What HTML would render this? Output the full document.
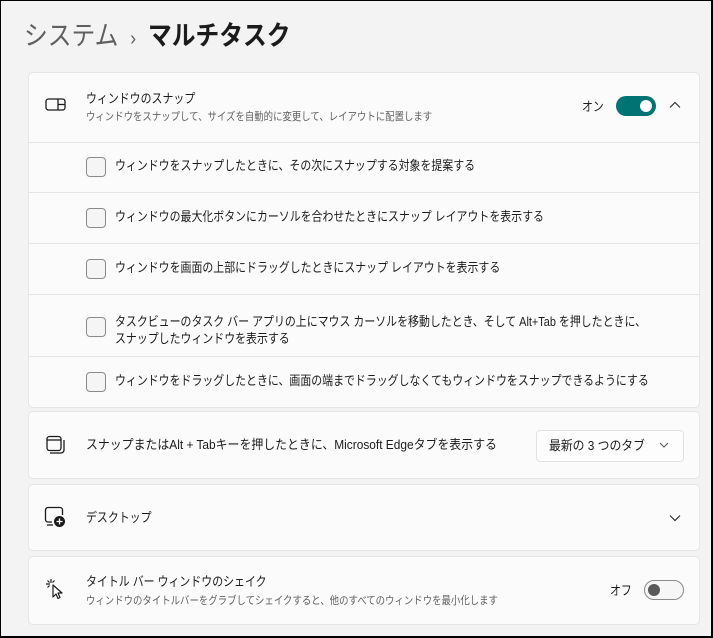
<!DOCTYPE html>
<html><head><meta charset="utf-8"><style>
*{box-sizing:border-box;margin:0;padding:0}
body{width:713px;height:638px;overflow:hidden;background:#f3f3f3;font-family:"Liberation Sans","Noto Sans CJK JP",sans-serif;color:#1b1b1b;position:relative}
.frame{position:absolute;left:0;top:0;width:713px;height:638px;border:1px solid #000;border-right:2px solid #000;border-bottom:2px solid #000;pointer-events:none}
.a{position:absolute}
.card{position:absolute;left:28px;width:672px;background:#fbfbfb;border:1px solid #e5e5e5;border-radius:5px}
.line{position:absolute;left:28px;width:672px;height:1px;background:#e5e5e5}
.t{position:absolute;font-size:13px;white-space:nowrap;line-height:16px;transform:scaleX(0.84);transform-origin:left top}
.s{position:absolute;font-size:11px;color:#606060;white-space:nowrap;line-height:14px;transform:scaleX(0.855);transform-origin:left top}
.cb{position:absolute;left:86px;width:20px;height:20px;border:1px solid #8a8a8a;border-radius:4px;background:#f5f5f5}
</style></head><body>
<div class="a" style="left:24px;top:18px;font-size:27px;line-height:36px;color:#5f5f5f;white-space:nowrap;transform:scaleX(0.88);transform-origin:left top">システム <span style="font-size:20px;margin:0 6px;color:#5f5f5f">›</span> <span style="color:#1b1b1b;font-weight:bold">マルチタスク</span></div>

<div class="card" style="top:72px;height:336px"></div>
<div class="line" style="top:142px"></div>
<div class="line" style="top:192px"></div>
<div class="line" style="top:243px"></div>
<div class="line" style="top:294px"></div>
<div class="line" style="top:356px"></div>

<svg class="a" style="left:45px;top:97px" width="22" height="16" viewBox="0 0 22 16"><rect x="1" y="2" width="19" height="11" rx="2.5" fill="none" stroke="#1b1b1b" stroke-width="1.3"/><line x1="13" y1="2" x2="13" y2="13" stroke="#1b1b1b" stroke-width="1.3"/><line x1="13" y1="7.5" x2="20" y2="7.5" stroke="#1b1b1b" stroke-width="1.3"/></svg>
<div class="t" style="left:86px;top:91px">ウィンドウのスナップ</div>
<div class="s" style="left:86px;top:110px">ウィンドウをスナップして、サイズを自動的に変更して、レイアウトに配置します</div>
<div class="t" style="left:582px;top:99px">オン</div>
<div class="a" style="left:616px;top:96px;width:40px;height:20px;border-radius:10px;background:#017373"></div>
<div class="a" style="left:640px;top:100px;width:12px;height:12px;border-radius:6px;background:#fff"></div>
<svg class="a" style="left:669px;top:101px" width="12" height="8" viewBox="0 0 12 8"><path d="M1 6.5 L6 1.5 L11 6.5" fill="none" stroke="#333" stroke-width="1.2"/></svg>

<div class="cb" style="top:157px"></div><div class="t" style="left:115px;top:158px">ウィンドウをスナップしたときに、その次にスナップする対象を提案する</div>
<div class="cb" style="top:208px"></div><div class="t" style="left:115px;top:209px">ウィンドウの最大化ボタンにカーソルを合わせたときにスナップ レイアウトを表示する</div>
<div class="cb" style="top:259px"></div><div class="t" style="left:115px;top:260px">ウィンドウを画面の上部にドラッグしたときにスナップ レイアウトを表示する</div>
<div class="cb" style="top:317px"></div><div class="t" style="left:115px;top:314px">タスクビューのタスク バー アプリの上にマウス カーソルを移動したとき、そして Alt+Tab を押したときに、</div><div class="t" style="left:115px;top:331px">スナップしたウィンドウを表示する</div>
<div class="cb" style="top:372px"></div><div class="t" style="left:115px;top:373px">ウィンドウをドラッグしたときに、画面の端までドラッグしなくてもウィンドウをスナップできるようにする</div>

<div class="card" style="top:411px;height:68px"></div>
<svg class="a" style="left:45px;top:435px" width="22" height="20" viewBox="0 0 22 20"><rect x="2" y="1.5" width="14" height="14" rx="2.5" fill="none" stroke="#1b1b1b" stroke-width="1.3"/><line x1="2" y1="5" x2="16" y2="5" stroke="#1b1b1b" stroke-width="1.3"/><path d="M5 18 H16 a3 3 0 0 0 3-3 V5" fill="none" stroke="#1b1b1b" stroke-width="1.3"/></svg>
<div class="t" style="left:86px;top:437px;transform:scaleX(0.915)">スナップまたはAlt + Tabキーを押したときに、Microsoft Edgeタブを表示する</div>
<div class="a" style="left:536px;top:430px;width:148px;height:32px;border:1px solid #e2e2e2;border-radius:4px;background:#fdfdfd"></div>
<div class="t" style="left:549px;top:438px;transform:scaleX(0.91)">最新の 3 つのタブ</div>
<svg class="a" style="left:659px;top:442px" width="10" height="6" viewBox="0 0 10 6"><path d="M1 1 L5 5 L9 1" fill="none" stroke="#555" stroke-width="1"/></svg>

<div class="card" style="top:484px;height:67px"></div>
<svg class="a" style="left:44px;top:506px" width="24" height="22" viewBox="0 0 24 22"><path d="M8 16 H4 a2.5 2.5 0 0 1-2.5-2.5 V4 a2.5 2.5 0 0 1 2.5-2.5 H16 a2.5 2.5 0 0 1 2.5 2.5 V9" fill="none" stroke="#1b1b1b" stroke-width="1.3"/><line x1="3" y1="19" x2="9" y2="19" stroke="#1b1b1b" stroke-width="1.3"/><circle cx="15.5" cy="15.5" r="5.5" fill="#1b1b1b"/><path d="M15.5 12.5 V18.5 M12.5 15.5 H18.5" stroke="#fff" stroke-width="1.3"/></svg>
<div class="t" style="left:86px;top:510px">デスクトップ</div>
<svg class="a" style="left:669px;top:514px" width="12" height="8" viewBox="0 0 12 8"><path d="M1 1.5 L6 6.5 L11 1.5" fill="none" stroke="#333" stroke-width="1.2"/></svg>

<div class="card" style="top:556px;height:69px"></div>
<svg class="a" style="left:45px;top:578px" width="22" height="22" viewBox="0 0 22 22"><path d="M6 1 V5 M1 6 H5 M2.5 2.5 L4.5 4.5 M9.5 2.5 L7.5 4.5 M2.5 9.5 L4.5 7.5" stroke="#1b1b1b" stroke-width="1.2"/><path d="M8 7 L8 19 L11 16 L13 20.5 L15 19.5 L13 15 L17 15 Z" fill="#fff" stroke="#1b1b1b" stroke-width="1.2" stroke-linejoin="round"/></svg>
<div class="t" style="left:86px;top:574px">タイトル バー ウィンドウのシェイク</div>
<div class="s" style="left:86px;top:594px">ウィンドウのタイトルバーをグラブしてシェイクすると、他のすべてのウィンドウを最小化します</div>
<div class="t" style="left:610px;top:583px">オフ</div>
<div class="a" style="left:644px;top:580px;width:40px;height:20px;border-radius:10px;border:1px solid #8a8a8a;background:#f6f6f6"></div>
<div class="a" style="left:648px;top:584px;width:12px;height:12px;border-radius:6px;background:#5a5a5a"></div>

<div class="frame"></div>
</body></html>
